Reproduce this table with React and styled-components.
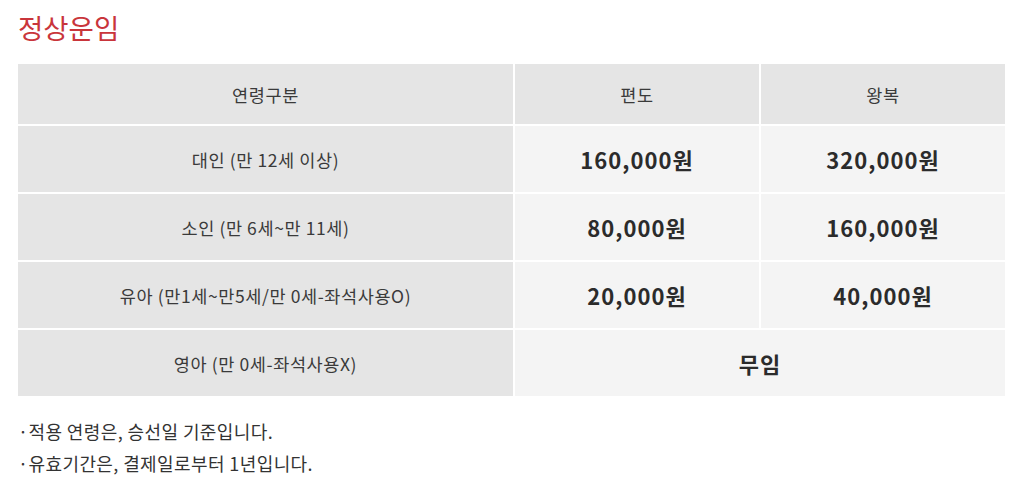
import React from 'react';
import styled, { createGlobalStyle } from 'styled-components';

const Global = createGlobalStyle`
  body {
    margin: 0;
    background: #fff;
    font-family: "Noto Sans CJK KR", "Noto Sans", sans-serif;
    color: #333;
  }
`;

const Page = styled.div`
  padding: 8px 19px 0 18px;
`;

const Title = styled.h2`
  margin: 0;
  height: 56px;
  font-size: 27.5px;
  font-weight: 400;
  line-height: 38px;
  color: #c9353b;
`;

const Table = styled.div`
  display: grid;
  grid-template-columns: 495px 244px 244px;
  grid-template-rows: 60px repeat(4, 66px);
  gap: 2px;
  background: #fff;
`;

const Cell = styled.div`
  display: flex;
  align-items: center;
  justify-content: center;
  background: ${p => (p.$price ? '#f4f4f4' : '#e5e5e5')};
  font-size: ${p => (p.$price ? '22px' : '17.5px')};
  font-weight: ${p => (p.$price ? 700 : 400)};
  letter-spacing: ${p => (p.$price ? '1px' : '0.6px')};
  color: ${p => (p.$price ? '#2b2b2b' : '#3a3a3a')};
  grid-column: ${p => p.$span || 'auto'};
`;

const Notes = styled.ul`
  list-style: none;
  margin: 0;
  padding: 19px 0 0 0;
`;

const Note = styled.li`
  font-size: 18px;
  line-height: 32px;
  letter-spacing: 0.4px;
  color: #333;
  &::before {
    content: '·';
  }
`;

const rows = [
  ['대인 (만 12세 이상)', '160,000원', '320,000원'],
  ['소인 (만 6세~만 11세)', '80,000원', '160,000원'],
  ['유아 (만1세~만5세/만 0세-좌석사용O)', '20,000원', '40,000원'],
];

export default function App() {
  return (
    <Page>
      <Global />
      <Title>정상운임</Title>
      <Table>
        <Cell>연령구분</Cell>
        <Cell>편도</Cell>
        <Cell>왕복</Cell>
        {rows.map(r => (
          <React.Fragment key={r[0]}>
            <Cell>{r[0]}</Cell>
            <Cell $price>{r[1]}</Cell>
            <Cell $price>{r[2]}</Cell>
          </React.Fragment>
        ))}
        <Cell>영아 (만 0세-좌석사용X)</Cell>
        <Cell $price $span="span 2">무임</Cell>
      </Table>
      <Notes>
        <Note>적용 연령은, 승선일 기준입니다.</Note>
        <Note>유효기간은, 결제일로부터 1년입니다.</Note>
      </Notes>
    </Page>
  );
}
